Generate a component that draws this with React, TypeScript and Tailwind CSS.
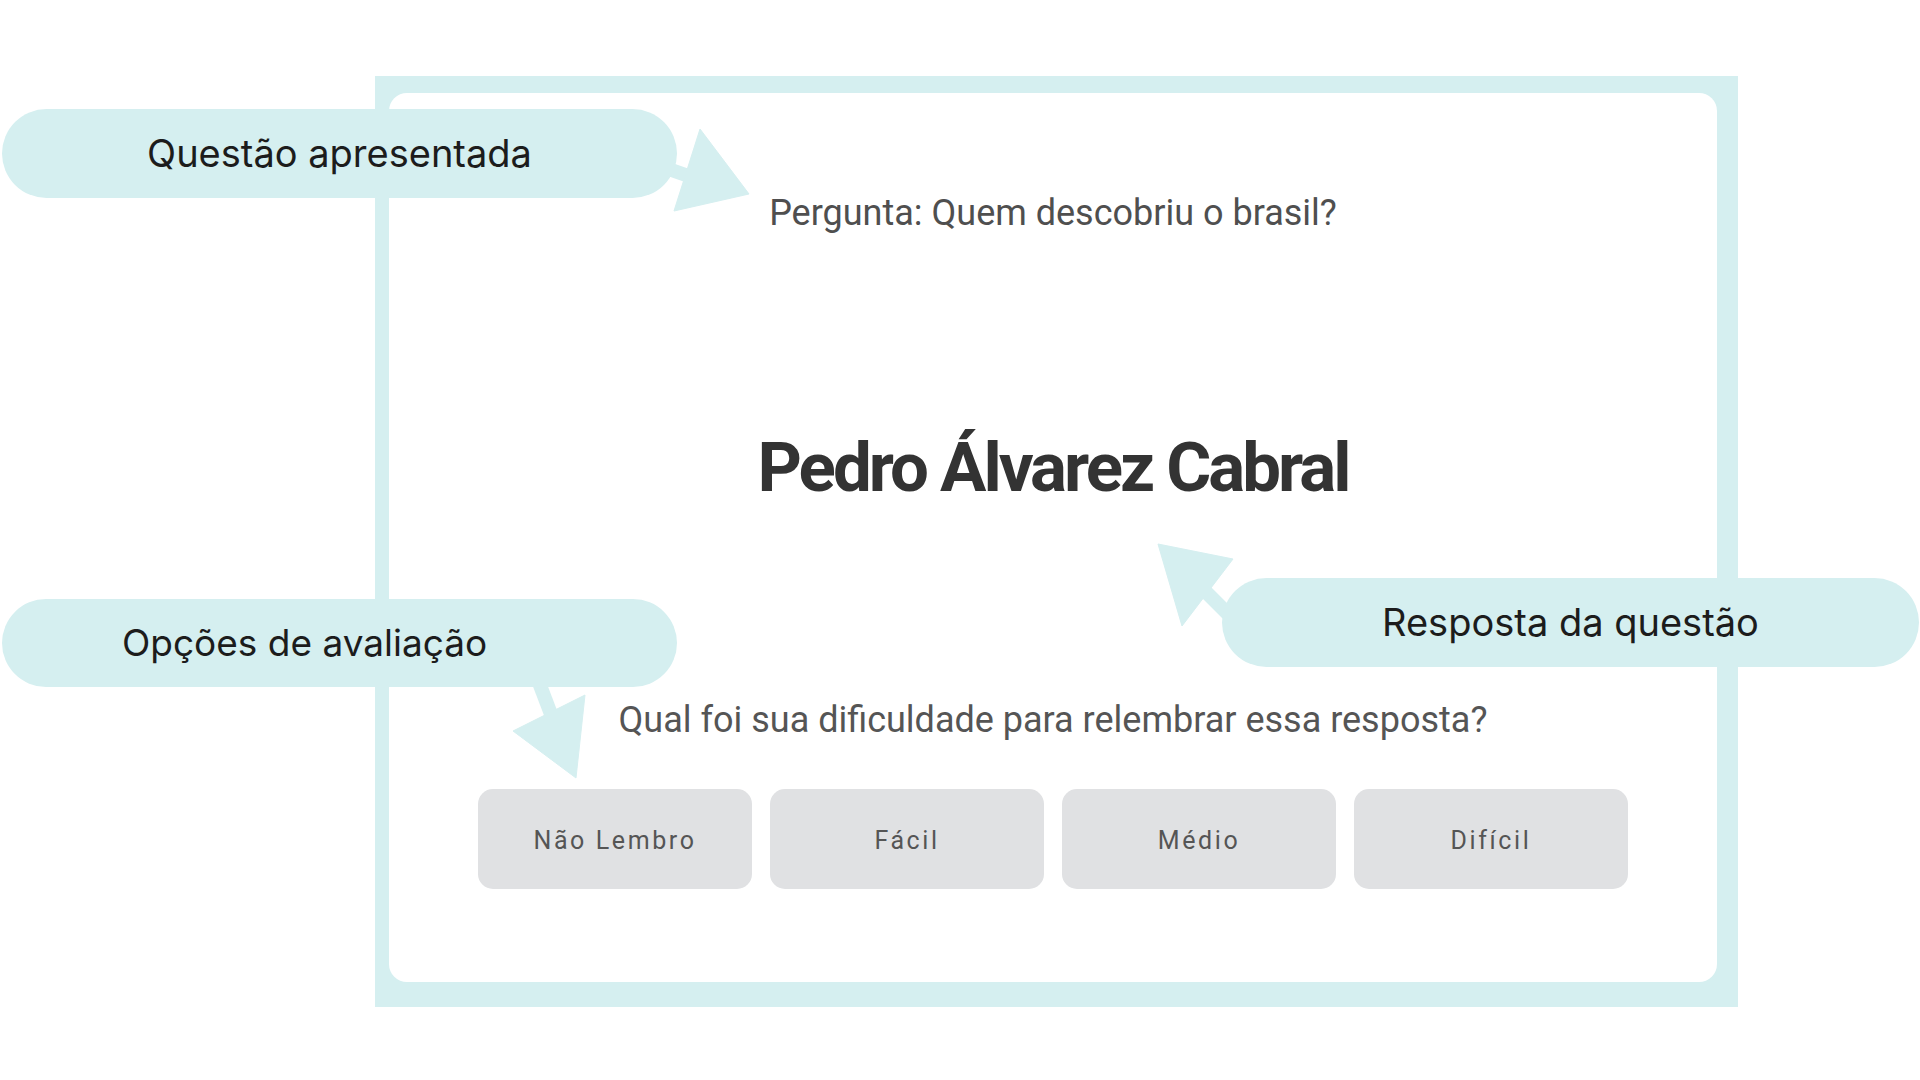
import React from "react";

const TEAL = "#d5eff0";

const options = ["Não Lembro", "Fácil", "Médio", "Difícil"];

const Pill = ({
  label,
  className,
}: {
  label: string;
  className: string;
}) => (
  <div
    className={`absolute flex items-center rounded-full bg-[#d5eff0] font-['Inter',sans-serif] text-[#1c1c1c] ${className}`}
  >
    {label}
  </div>
);

export default function App() {
  return (
    <div className="relative h-[1080px] w-full overflow-hidden bg-white">
      {/* Flashcard frame */}
      <div className="ml-[375px] pt-[76px]">
        <div className="h-[931px] w-[1363px] bg-[#d5eff0] pb-[25px] pl-[14px] pr-[21px] pt-[17px]">
          <div className="flex h-full flex-col items-center rounded-[18px] bg-white pt-[96px]">
            <p className="font-['Roboto',sans-serif] text-[36px] leading-[48px] text-[#4f4f4f]">
              Pergunta: Quem descobriu o brasil?
            </p>
            <h1 className="mt-[195px] font-['Roboto',sans-serif] text-[69px] font-bold leading-[72px] tracking-[-3px] text-[#333333]">
              Pedro Álvarez Cabral
            </h1>
            <p className="mt-[192px] font-['Roboto',sans-serif] text-[36px] leading-[48px] text-[#555555]">
              Qual foi sua dificuldade para relembrar essa resposta?
            </p>
            <div className="mt-[45px] flex gap-[18px]">
              {options.map((o) => (
                <button
                  key={o}
                  type="button"
                  className="flex h-[100px] w-[274px] items-center justify-center rounded-[15px] bg-[#e0e1e3] pt-[3px] font-['Roboto',sans-serif] text-[25px] tracking-[2.6px] text-[#555555]"
                >
                  {o}
                </button>
              ))}
            </div>
          </div>
        </div>
      </div>

      {/* Annotation arrows */}
      <svg
        className="pointer-events-none absolute inset-0"
        width="1920"
        height="1080"
        viewBox="0 0 1920 1080"
      >
        <g fill={TEAL} stroke={TEAL} strokeLinejoin="round">
          <line x1="660" y1="166" x2="700" y2="180" strokeWidth="14" />
          <polygon points="700,129 749,194 674,211" strokeWidth="1" />

          <line x1="538" y1="680" x2="554" y2="722" strokeWidth="14" />
          <polygon points="513,731 585,695 576,778" strokeWidth="1" />

          <line x1="1200" y1="586" x2="1232" y2="618" strokeWidth="14" />
          <polygon points="1158,544 1233,559 1182,626" strokeWidth="1" />
        </g>
      </svg>

      {/* Annotation labels */}
      <Pill
        label="Questão apresentada"
        className="left-[2px] top-[109px] h-[89px] w-[675px] justify-center text-[38px]"
      />
      <Pill
        label="Opções de avaliação"
        className="left-[2px] top-[599px] h-[88px] w-[675px] pl-[120px] text-[37px]"
      />
      <Pill
        label="Resposta da questão"
        className="left-[1222px] top-[578px] h-[89px] w-[697px] justify-center text-[38px]"
      />
    </div>
  );
}
